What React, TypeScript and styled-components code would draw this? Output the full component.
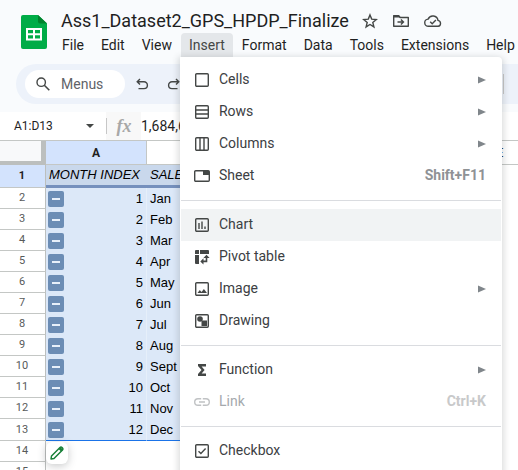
import React from "react";
import styled, { createGlobalStyle, css } from "styled-components";

const GlobalStyle = createGlobalStyle`
  *, *::before, *::after { box-sizing: border-box; }
  body { margin: 0; background: #ffffff; font-family: Roboto, "Liberation Sans", sans-serif; }
  button, input { font: inherit; color: inherit; }
`;

const Page = styled.div`
  height: 100vh;
  overflow: hidden;
  display: flex;
  flex-direction: column;
  background: #ffffff;
`;

const TopArea = styled.header`
  flex: none;
  background: #f9fbfd;
  padding-bottom: 8px;
`;

const Brand = styled.div`
  display: flex;
  align-items: flex-start;
  padding-left: 21px;
`;

const Logo = styled.a`
  flex: none;
  display: block;
  height: 34px;
  margin-top: 15px;
`;

const BrandText = styled.div`
  flex: 1;
  min-width: 0;
  padding-left: 7px;
`;

const TitleRow = styled.div`
  display: flex;
  align-items: center;
  height: 33px;
  padding: 8px 0 0 7px;
`;

const Title = styled.h1`
  margin: 0 13px 0 0;
  font-size: 18px;
  line-height: 24px;
  font-weight: 400;
  color: #1f1f1f;
  white-space: nowrap;
`;

const IconButton = styled.button`
  flex: none;
  display: flex;
  border: 0;
  padding: 0;
  background: transparent;
  color: #444746;
`;

const TitleActions = styled.div`
  display: flex;
  align-items: center;
  gap: 14px;
`;

const MenuBar = styled.nav`
  display: flex;
  gap: 1px;
  height: 24px;
`;

const MenuSlot = styled.div`
  position: relative;
  flex: none;
`;

const MenuTab = styled.button<{ $open?: boolean }>`
  height: 24px;
  border: 0;
  border-radius: 4px 4px 0 0;
  padding: 0 8px;
  font-size: 14px;
  line-height: 24px;
  color: ${(p) => (p.$open ? "#444746" : "#1f1f1f")};
  background: ${(p) => (p.$open ? "#e4e7ea" : "transparent")};
`;

const Dropdown = styled.div`
  position: absolute;
  z-index: 5;
  top: 100%;
  left: -1px;
  width: 322px;
  padding: 7px 1px 16px;
  background: #ffffff;
  border-radius: 0 4px 0 0;
  box-shadow: 0 2px 6px 2px rgba(60, 64, 67, 0.18);
`;

const Item = styled.button<{ $active?: boolean }>`
  display: grid;
  grid-template-columns: 16px 1fr auto;
  column-gap: 9px;
  align-items: center;
  width: 100%;
  height: 32px;
  border: 0;
  padding: 0 15px 0 13px;
  text-align: left;
  font-size: 14px;
  line-height: 30px;
  color: #3c4043;
  background: ${(p) => (p.$active ? "#f1f3f4" : "transparent")};

  svg {
    display: block;
    color: #444746;
  }

  &:disabled {
    color: #a5a9ad;
  }

  &:disabled svg {
    color: #c0c2c4;
  }
`;

const ItemLabel = styled.span`
  padding-bottom: 2px;
`;

const Shortcut = styled.span<{ $faded?: boolean }>`
  padding-bottom: 2px;
  font-weight: 700;
  color: ${(p) => (p.$faded ? "#c8c9ca" : "#8f9295")};
`;

const Separator = styled.hr`
  height: 1px;
  margin: 8px 0;
  border: 0;
  background: #dadce0;
`;

const Toolbar = styled.div`
  display: flex;
  align-items: center;
  height: 40px;
  margin: 7px 0 0 16px;
  padding: 0 14px 0 9px;
  border-radius: 20px 0 0 20px;
  background: #edf2fa;
`;

const SearchBox = styled.label`
  flex: none;
  display: flex;
  align-items: center;
  gap: 11px;
  width: 100px;
  height: 28px;
  padding: 0 11px;
  border-radius: 14px;
  background: #ffffff;
  color: #444746;
`;

const SearchInput = styled.input`
  width: 48px;
  border: 0;
  padding: 0;
  outline: 0;
  font-size: 14px;
  line-height: 20px;
  background: transparent;

  &::placeholder {
    color: #5f6368;
    opacity: 1;
  }
`;

const HistoryButtons = styled.div`
  display: flex;
  flex: 1;
  gap: 18px;
  padding-left: 10px;
`;

const ToolbarRule = styled.span`
  width: 1px;
  height: 20px;
  background: #c7c7c7;
`;

const FormulaBar = styled.div`
  flex: none;
  display: flex;
  align-items: center;
  height: 28px;
  background: #ffffff;
`;

const NameBox = styled.button`
  display: flex;
  align-items: center;
  justify-content: space-between;
  width: 106px;
  border: 0;
  padding: 0 12px 0 14px;
  font-size: 12px;
  line-height: 16px;
  color: #1f1f1f;
  background: transparent;
`;

const FxCell = styled.span`
  display: flex;
  align-items: center;
  justify-content: center;
  width: 35px;
  height: 28px;
  background: #f8f8f8;
  color: #a8a8a8;

  &::before {
    content: "";
    width: 1px;
    height: 16px;
    margin-right: auto;
    background: #c7c7c7;
  }
`;

const FxSign = styled.i`
  margin-right: auto;
  font-family: "Liberation Serif", serif;
  font-weight: 700;
  font-size: 18px;
  line-height: 20px;
`;

const FormulaInput = styled.input`
  flex: 1;
  min-width: 0;
  border: 0;
  padding: 0;
  outline: 0;
  font-size: 14px;
  line-height: 20px;
  color: #1f1f1f;
  background: transparent;
`;

const SheetArea = styled.main`
  flex: 1;
  min-height: 0;
  overflow: hidden;
`;

const Sheet = styled.table`
  table-layout: fixed;
  width: 551px;
  border-collapse: separate;
  border-spacing: 0;
  border-top: 1px solid #c4c7c5;
`;

const RowNumberCol = styled.col`
  width: 46px;
`;

const Corner = styled.td`
  height: 24px;
  padding: 0;
  border-right: 5px solid #bcbfbe;
  border-bottom: 4px solid #bcbfbe;
  background: #f8f9fa;
`;

const ColumnHead = styled.th<{ $selected?: boolean }>`
  height: 24px;
  padding: 0;
  border-right: 1px solid #c4c7c5;
  border-bottom: 1px solid #c4c7c5;
  font-size: 12px;
  line-height: 16px;
  font-weight: ${(p) => (p.$selected ? 700 : 400)};
  color: #1f1f1f;
  background: ${(p) => (p.$selected ? "#d3e3fd" : "#ffffff")};
`;

const RowHead = styled.th<{ $selected?: boolean }>`
  height: 21px;
  padding: 0 1px 0 0;
  border-right: 1px solid #bcbfbe;
  border-bottom: 1px solid #c4c7c5;
  font-size: 11px;
  line-height: 16px;
  font-weight: ${(p) => (p.$selected ? 700 : 400)};
  color: ${(p) => (p.$selected ? "#1f1f1f" : "#575a5a")};
  background: ${(p) => (p.$selected ? "#d3e3fd" : "#ffffff")};
`;

const cellText = css`
  font-family: "Liberation Sans", Arial, sans-serif;
  font-size: 13px;
  line-height: 16px;
  color: #000000;
  white-space: nowrap;
`;

const FieldCell = styled.td`
  ${cellText}
  height: 23px;
  padding: 0 3px;
  border-bottom: 3px solid #7590bd;
  font-style: italic;
  background: #c9d8ec;
`;

const DataCell = styled.td<{ $last?: boolean }>`
  ${cellText}
  padding: 0 3px;
  border-right: 1px solid #e6effa;
  border-bottom: ${(p) => (p.$last ? "1px solid #1a73e8" : "0")};
  background: #dce8f8;
`;

const BlankCell = styled.td`
  padding: 0;
  vertical-align: top;
`;

const IndexContent = styled.div`
  display: flex;
  align-items: center;
  justify-content: space-between;
  height: 21px;
`;

const Collapse = styled.button`
  display: flex;
  align-items: center;
  justify-content: center;
  width: 16px;
  height: 16px;
  margin-left: -1px;
  border: 0;
  border-radius: 2px;
  padding: 0;
  background: #6c8db5;

  &::before {
    content: "";
    width: 8px;
    height: 2px;
    background: #e8f0fa;
  }
`;

const EditSlot = styled.div`
  position: relative;
  height: 0;
`;

const EditBadge = styled.button`
  position: absolute;
  top: 1px;
  left: 0;
  display: flex;
  align-items: center;
  justify-content: center;
  width: 22px;
  height: 22px;
  border: 0;
  border-radius: 6px;
  padding: 0;
  background: #ffffff;
  box-shadow: 0 2px 8px rgba(60, 64, 67, 0.28);
`;

const Ico = ({ children, w = 16, h = 16 }: { children: React.ReactNode; w?: number; h?: number }) => (
  <svg
    width={w}
    height={h}
    viewBox={`0 0 ${w} ${h}`}
    fill="none"
    stroke="currentColor"
    strokeWidth="1.4"
    aria-hidden="true"
  >
    {children}
  </svg>
);

const Frame = () => <rect x="1.7" y="1.7" width="12.6" height="12.6" rx="1" />;

const icons: Record<string, React.ReactNode> = {
  cells: <Ico><Frame /></Ico>,
  rows: <Ico><Frame /><path d="M1.7 6h12.6M1.7 10h12.6" /></Ico>,
  columns: <Ico><Frame /><path d="M6 1.7v12.6M10 1.7v12.6" /></Ico>,
  sheet: (
    <Ico>
      <rect x="0.7" y="2.7" width="14.6" height="10.6" rx="1" />
      <path d="M9 3h6v4H9z" fill="currentColor" stroke="none" />
    </Ico>
  ),
  chart: <Ico><Frame /><path d="M5 6v6M8 4.5V12M11 9.5V12" /></Ico>,
  pivot: (
    <Ico>
      <g fill="currentColor" stroke="none">
        <path d="M1 2a1 1 0 0 1 1-1h3v4H1zM6 1h8a1 1 0 0 1 1 1v3H6zM1 6h4v9H2a1 1 0 0 1-1-1z" />
        <path d="M12.5 5.8 15.6 9H9.4zM6.3 12.4l3.2-3.1v6.2z" />
      </g>
      <path d="M12.5 8.5v3.9H9" strokeWidth="1.6" />
    </Ico>
  ),
  image: (
    <Ico>
      <Frame />
      <path d="m3.5 12 2.3-3 1.7 2 2.4-3.1L13 12z" fill="currentColor" stroke="none" />
    </Ico>
  ),
  drawing: (
    <Ico>
      <Frame />
      <circle cx="6" cy="6" r="2.8" fill="currentColor" stroke="none" />
      <path d="M7.5 7.5H13V13H7.5z" fill="currentColor" stroke="none" />
    </Ico>
  ),
  sigma: (
    <Ico>
      <path d="M4 2h8v2.6H7.6L10.6 8l-3 3.4H12V14H4v-1.9L7.5 8 4 3.9z" fill="currentColor" stroke="none" />
    </Ico>
  ),
  link: (
    <Ico>
      <path d="M7.2 4.7H4a3.3 3.3 0 0 0 0 6.6h3.2M8.8 4.7H12a3.3 3.3 0 0 1 0 6.6H8.8M5 8h6" />
    </Ico>
  ),
  check: <Ico><Frame /><path d="m4.5 8.2 2.4 2.3 4.7-4.9" /></Ico>,
};

const SubmenuArrow = () => (
  <svg width="8" height="8" viewBox="0 0 8 8" aria-hidden="true">
    <path d="M0 .5 8 4 0 7.5z" fill="#80868b" />
  </svg>
);

type Entry = { icon: string; label: string; sub?: boolean; keys?: string; active?: boolean; disabled?: boolean };

const insertGroups: Entry[][] = [
  [
    { icon: "cells", label: "Cells", sub: true },
    { icon: "rows", label: "Rows", sub: true },
    { icon: "columns", label: "Columns", sub: true },
    { icon: "sheet", label: "Sheet", keys: "Shift+F11" },
  ],
  [
    { icon: "chart", label: "Chart", active: true },
    { icon: "pivot", label: "Pivot table" },
    { icon: "image", label: "Image", sub: true },
    { icon: "drawing", label: "Drawing" },
  ],
  [
    { icon: "sigma", label: "Function", sub: true },
    { icon: "link", label: "Link", keys: "Ctrl+K", disabled: true },
  ],
  [{ icon: "check", label: "Checkbox" }],
];

const InsertMenu = () => (
  <Dropdown role="menu">
    {insertGroups.map((group, g) => (
      <React.Fragment key={g}>
        {g > 0 && <Separator />}
        {group.map((e) => (
          <Item key={e.label} role="menuitem" $active={e.active} disabled={e.disabled}>
            {icons[e.icon]}
            <ItemLabel>{e.label}</ItemLabel>
            {e.sub && <SubmenuArrow />}
            {e.keys && <Shortcut $faded={e.disabled}>{e.keys}</Shortcut>}
          </Item>
        ))}
      </React.Fragment>
    ))}
  </Dropdown>
);

const menus = ["File", "Edit", "View", "Insert", "Format", "Data", "Tools", "Extensions", "Help"];
const months = ["Jan", "Feb", "Mar", "Apr", "May", "Jun", "Jul", "Aug", "Sept", "Oct", "Nov", "Dec"];

export default function App() {
  return (
    <Page>
      <GlobalStyle />
      <TopArea>
        <Brand>
          <Logo href="#" aria-label="Sheets home">
            <svg width="26" height="34" viewBox="0 0 26 34" aria-hidden="true">
              <path d="M2 0h15l9 8.5V32a2 2 0 0 1-2 2H2a2 2 0 0 1-2-2V2a2 2 0 0 1 2-2z" fill="#00ac47" />
              <path d="M17 0l9 8.5h-7a2 2 0 0 1-2-2z" fill="#00832d" />
              <path
                d="M5 13h16v12.5H5zM7 15v3.2h5V15zM14 15v3.2h5V15zM7 20.2v3.3h5v-3.3zM14 20.2v3.3h5v-3.3z"
                fill="#ffffff"
                fillRule="evenodd"
              />
            </svg>
          </Logo>
          <BrandText>
            <TitleRow>
              <Title>Ass1_Dataset2_GPS_HPDP_Finalize</Title>
              <TitleActions>
                <IconButton aria-label="Star">
                  <Ico>
                    <path d="m8 1.9 1.7 4.2 4.6.4-3.5 3 1.1 4.4L8 11.5l-3.9 2.4 1.1-4.4-3.5-3 4.6-.4z" />
                  </Ico>
                </IconButton>
                <IconButton aria-label="Move">
                  <Ico w={18}>
                    <path d="M1.7 2.7h5l1.5 1.8h8.1v8.8H1.7z" strokeLinejoin="round" />
                    <path d="M1.5 2.5h5.4l1.6 2h-7z" fill="currentColor" stroke="none" />
                    <path d="M5.5 9h5.5M8.9 6.4 11.5 9l-2.6 2.6" />
                  </Ico>
                </IconButton>
                <IconButton aria-label="Saved to Drive">
                  <Ico w={18}>
                    <path d="M4.6 13.3a3.6 3.6 0 0 1-.5-7.2 5.2 5.2 0 0 1 9.9 1.3 3 3 0 0 1 .1 5.9z" />
                    <path d="m6.2 8.8 2 2 3.7-3.8" />
                  </Ico>
                </IconButton>
              </TitleActions>
            </TitleRow>
            <MenuBar>
              {menus.map((m) => (
                <MenuSlot key={m}>
                  <MenuTab $open={m === "Insert"}>{m}</MenuTab>
                  {m === "Insert" && <InsertMenu />}
                </MenuSlot>
              ))}
            </MenuBar>
          </BrandText>
        </Brand>
        <Toolbar>
          <SearchBox>
            <Ico w={14} h={14}>
              <circle cx="5.2" cy="5.2" r="4.2" />
              <path d="m8.3 8.3 5 5" strokeWidth="1.6" />
            </Ico>
            <SearchInput aria-label="Menus" placeholder="Menus" />
          </SearchBox>
          <HistoryButtons>
            <IconButton aria-label="Undo">
              <Ico w={14} h={14}>
                <path d="M5 2 2.2 4.8 5 7.6M2.4 4.8H9a3.4 3.4 0 0 1 0 6.8H3.5" />
              </Ico>
            </IconButton>
            <IconButton aria-label="Redo">
              <Ico w={14} h={14}>
                <path d="m9 2 2.8 2.8L9 7.6M11.6 4.8H5a3.4 3.4 0 0 0 0 6.8h5.5" />
              </Ico>
            </IconButton>
          </HistoryButtons>
          <ToolbarRule />
        </Toolbar>
      </TopArea>
      <FormulaBar>
        <NameBox aria-label="Name box">
          A1:D13
          <svg width="8" height="4" viewBox="0 0 8 4" aria-hidden="true">
            <path d="M0 0h8L4 4z" fill="#444746" />
          </svg>
        </NameBox>
        <FxCell>
          <FxSign>fx</FxSign>
        </FxCell>
        <FormulaInput aria-label="Formula" defaultValue="1,684,6" />
      </FormulaBar>
      <SheetArea>
        <Sheet>
          <colgroup>
            <RowNumberCol />
            <col span={5} />
          </colgroup>
          <thead>
            <tr>
              <Corner />
              {["A", "B", "C", "D", "E"].map((c) => (
                <ColumnHead key={c} scope="col" $selected={c === "A"}>
                  {c}
                </ColumnHead>
              ))}
            </tr>
          </thead>
          <tbody>
            <tr>
              <RowHead scope="row" $selected>1</RowHead>
              <FieldCell>MONTH INDEX</FieldCell>
              <FieldCell>SALES</FieldCell>
            </tr>
            {months.map((month, i) => (
              <tr key={month}>
                <RowHead scope="row">{i + 2}</RowHead>
                <DataCell $last={i === 11}>
                  <IndexContent>
                    <Collapse aria-label={`Collapse row ${i + 2}`} />
                    {i + 1}
                  </IndexContent>
                </DataCell>
                <DataCell $last={i === 11}>{month}</DataCell>
              </tr>
            ))}
            <tr>
              <RowHead scope="row">14</RowHead>
              <BlankCell>
                <EditSlot>
                  <EditBadge aria-label="Edit table">
                    <svg width="16" height="16" viewBox="0 0 16 16" fill="none" stroke="#188038" strokeWidth="1.5" aria-hidden="true">
                      <path d="m2 14 .5-3L11 2.5a1.4 1.4 0 0 1 2 0l.5.5a1.4 1.4 0 0 1 0 2L5 13.5z" strokeLinejoin="round" />
                      <path d="m9.5 4 2.5 2.5 1.8-1.8L11.8 2z" fill="#188038" stroke="none" />
                    </svg>
                  </EditBadge>
                </EditSlot>
              </BlankCell>
            </tr>
            <tr>
              <RowHead scope="row">15</RowHead>
            </tr>
          </tbody>
        </Sheet>
      </SheetArea>
    </Page>
  );
}
